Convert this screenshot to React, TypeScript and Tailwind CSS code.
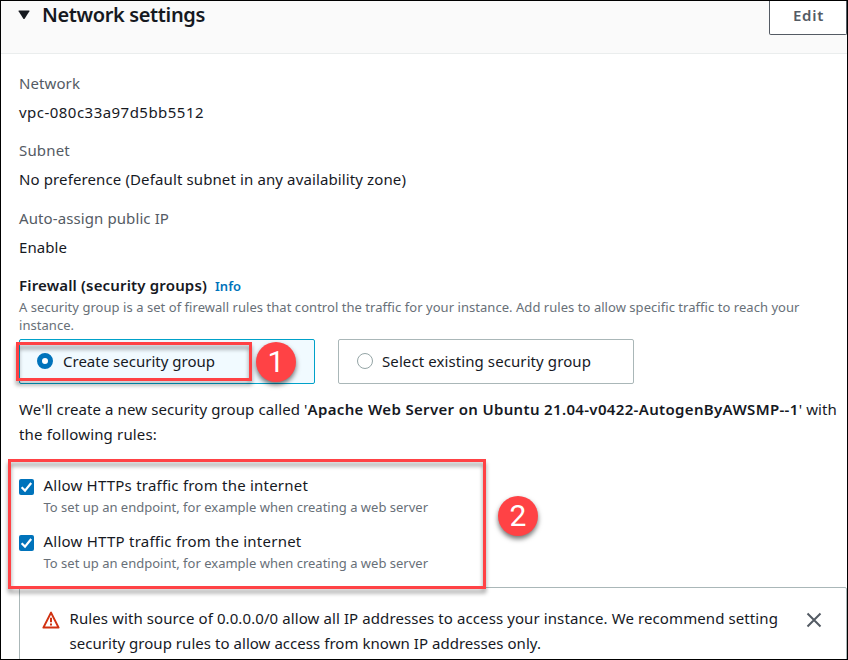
import type { ReactNode } from "react";

function Field({ label, value }: { label: ReactNode; value: ReactNode }) {
  return (
    <div className="flex flex-col gap-[5px]">
      <dt className="text-[#545b64]">{label}</dt>
      <dd>{value}</dd>
    </div>
  );
}

function CheckRow({ label }: { label: ReactNode }) {
  return (
    <label className="flex h-14 gap-[9.5px]">
      <span className="mt-[6px] flex h-4 w-[15px] items-center justify-center rounded-[2px] bg-[#0073bb]">
        <svg viewBox="0 0 15 16" className="h-4 w-[15px]" fill="none" stroke="#fff" strokeWidth="2.2">
          <path d="M2.6 8.2 6 11.6 12.2 4" />
        </svg>
      </span>
      <span className="flex flex-col">
        <span className="h-[25px]">{label}</span>
        <span className="text-[13px] leading-[18px] tracking-[0.004px] text-[#687078]">
          To set up an endpoint, for example when creating a web server
        </span>
      </span>
    </label>
  );
}

function Badge({ n, className }: { n: number; className: string }) {
  return (
    <span
      className={`absolute flex size-10 items-center justify-center rounded-full bg-[#ff4245] font-['Roboto','Liberation_Sans',sans-serif] text-[30px] leading-none text-white shadow-[0_3px_5px_rgba(0,0,0,0.55)] ${className}`}
    >
      {n}
    </span>
  );
}

export default function App() {
  return (
    <div className="relative flex h-[660px] w-[848px] flex-col overflow-hidden border border-black bg-white font-['Noto_Sans','Open_Sans',sans-serif] text-[15px] leading-6 whitespace-nowrap text-[#16191f]">
      <header className="flex h-[53px] shrink-0 justify-between border-b border-[#eaeded] bg-[#fafafa]">
        <h2 className="flex h-7 items-center pl-[17px] text-[20px] font-semibold tracking-[-0.37px]">
          <svg viewBox="0 0 12 10" className="mr-3 h-[10px] w-3" fill="#16191f">
            <path d="M1 .5h10q.8 0 .4.7L6.8 8.6q-.8 1-1.6 0L.6 1.2Q.2.5 1 .5Z" />
          </svg>
          Network settings
        </h2>
        <button className="flex h-[34px] w-[78px] items-start justify-center rounded-b-[2px] border border-t-0 border-[#545b64] bg-white pt-[2px] pl-px font-semibold tracking-[0.7px] text-[#545b64]">
          Edit
        </button>
      </header>

      <main className="flex flex-col pt-[17px] pl-[18px]">
        <dl className="flex flex-col gap-[14.4px]">
          <Field
            label={<span className="tracking-[0.09px]">Network</span>}
            value={<span className="tracking-[0.47px]">vpc-080c33a97d5bb5512</span>}
          />
          <Field
            label={<span className="tracking-[0.18px]">Subnet</span>}
            value={
              <span className="tracking-[0.119px]">
                No preference (Default subnet in any availability zone)
              </span>
            }
          />
          <Field
            label={<span className="tracking-[0.098px]">Auto-assign public IP</span>}
            value={<span className="tracking-[0.07px]">Enable</span>}
          />
        </dl>

        <h3 className="mt-[14.2px] flex items-baseline gap-2 font-semibold tracking-[0.162px]">
          Firewall (security groups)
          <a className="text-[13px] tracking-[0.013px] text-[#0073bb]">Info</a>
        </h3>
        <p className="text-[13px] leading-[18px] text-[#687078]">
          <span className="tracking-[0.044px]">
            A security group is a set of firewall rules that control the traffic for your instance. Add rules to
            allow specific traffic to reach your
          </span>
          <br />
          <span className="tracking-[0.044px]">instance.</span>
        </p>

        <div className="mt-[5px] flex gap-[23px]">
          <label className="flex h-[45px] w-[296px] items-center gap-[10px] rounded-[2px] border border-[#00a1c9] bg-[#f1faff] pl-[17px] tracking-[0.007px]">
            <span className="size-4 rounded-full border-[5px] border-[#0073bb] bg-white" />
            <span className="-mt-px">Create security group</span>
          </label>
          <label className="flex h-[45px] w-[296px] items-center gap-[9px] rounded-[2px] border border-[#aab7b8] bg-white pl-[18px] tracking-[0.093px]">
            <span className="size-4 rounded-full border border-[#95a5a6] bg-white" />
            <span className="-mt-px">Select existing security group</span>
          </label>
        </div>

        <p className="mt-[13px] leading-[25px]">
          <span className="tracking-[0.104px]">We'll create a new security group called '</span>
          <b className="font-semibold tracking-[0.338px]">
            Apache Web Server on Ubuntu 21.04-v0422-AutogenByAWSMP--1
          </b>
          <span className="tracking-[0.104px]">' with</span>
          <br />
          <span className="tracking-[0.157px]">the following rules:</span>
        </p>

        <div className="mt-[26px] flex flex-col">
          <CheckRow label={<span className="tracking-[0.216px]">Allow HTTPs traffic from the internet</span>} />
          <CheckRow label={<span className="tracking-[0.241px]">Allow HTTP traffic from the internet</span>} />
        </div>

        <section className="mt-[2px] flex h-[90px] w-[828px] rounded-[2px] border border-[#aab7b8] pt-[18px] pl-[22px] leading-[25px]">
          <svg viewBox="0 0 18 18" className="mt-[5px] h-[18px] w-[18px]" fill="none" stroke="#d13212" strokeWidth="2">
            <path d="M9 1.6 1.4 16.6h15.2Z" strokeLinejoin="round" />
            <path d="M9 6.8v4.4M9 12.4v2" />
          </svg>
          <p className="ml-[9.5px] w-[736.5px]">
            <span className="tracking-[0.095px]">
              Rules with source of 0.0.0.0/0 allow all IP addresses to access your instance. We recommend setting
            </span>
            <br />
            <span className="tracking-[0.042px]">
              security group rules to allow access from known IP addresses only.
            </span>
          </p>
          <svg viewBox="0 0 16 16" className="mt-[6px] size-4" fill="none" stroke="#545b64" strokeWidth="2">
            <path d="m1.5 1.5 13 13m0-13-13 13" />
          </svg>
        </section>
      </main>

      <div className="absolute top-[341px] left-[15px] h-[39px] w-[236px] border-3 border-[#ff4245] drop-shadow-[0_4px_2px_rgba(0,0,0,0.4)]" />
      <Badge n={1} className="top-[341px] left-[255px]" />
      <div className="absolute top-[458px] left-[7px] h-[130px] w-[478px] border-3 border-[#ff4245] drop-shadow-[0_4px_2px_rgba(0,0,0,0.4)]" />
      <Badge n={2} className="top-[495px] left-[497px]" />
    </div>
  );
}
